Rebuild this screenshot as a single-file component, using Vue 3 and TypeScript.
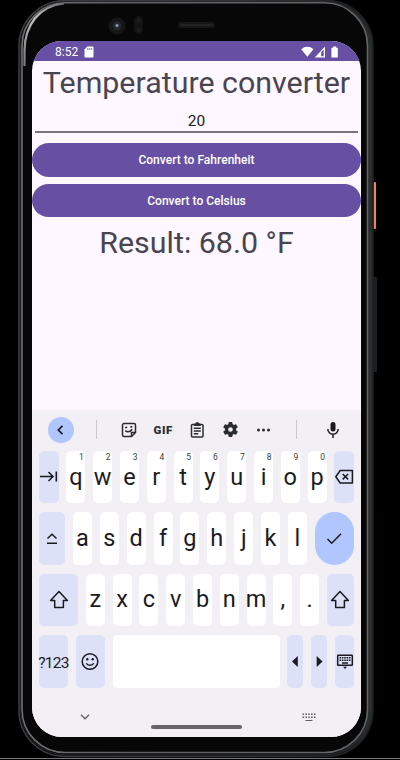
<script setup lang="ts">
import { ref } from 'vue'

interface Key {
  id: string
  w: number
  label?: string
  hint?: string
  icon?: string
  tone?: 'soft' | 'round'
}

const input = ref('20')
const result = ref('Result: 68.0 °F')

function convert(toFahrenheit: boolean): void {
  const value = Number(input.value)
  result.value = toFahrenheit
    ? `Result: ${((value * 9) / 5 + 32).toFixed(1)} °F`
    : `Result: ${(((value - 32) * 5) / 9).toFixed(1)} °C`
}

function letters(chars: string, hints = ''): Key[] {
  return chars.split('').map((c, i) => ({ id: c, w: 19, label: c, hint: hints[i] }))
}

const rows: Key[][] = [
  [
    { id: 'tab', w: 19.5, icon: 'tab', tone: 'soft' },
    ...letters('qwertyuiop', '1234567890'),
    { id: 'back', w: 19.5, icon: 'back', tone: 'soft' },
  ],
  [
    { id: 'caps', w: 26, icon: 'caps', tone: 'soft' },
    ...letters('asdfghjkl'),
    { id: 'done', w: 39, icon: 'done', tone: 'round' },
  ],
  [
    { id: 'shift-left', w: 39, icon: 'shift', tone: 'soft' },
    ...letters('zxcvbnm,.'),
    { id: 'shift-right', w: 27, icon: 'shift', tone: 'soft' },
  ],
  [
    { id: 'symbols', w: 29, label: '?123', tone: 'soft' },
    { id: 'emoji', w: 29, icon: 'emoji', tone: 'soft' },
    { id: 'space', w: 167 },
    { id: 'left', w: 15.5, icon: 'left', tone: 'soft' },
    { id: 'right', w: 16.5, icon: 'right', tone: 'soft' },
    { id: 'hide', w: 19, icon: 'hide', tone: 'soft' },
  ],
]
</script>

<template>
  <div class="stage">
    <svg class="body" viewBox="0 0 400 760" aria-hidden="true">
      <defs>
        <linearGradient id="rim" x1="0" y1="0" x2="1" y2="0">
          <stop offset="0" stop-color="#707276" />
          <stop offset="0.3" stop-color="#5f5d61" />
          <stop offset="1" stop-color="#626466" />
        </linearGradient>
        <linearGradient id="shine" x1="0" y1="1" x2="1" y2="0">
          <stop offset="0" stop-color="#77797b" />
          <stop offset="0.5" stop-color="#c4c5c1" />
          <stop offset="1" stop-color="#6c6c6e" />
        </linearGradient>
        <linearGradient id="edge" x1="0" y1="0" x2="1" y2="0">
          <stop offset="0" stop-color="#3c3e41" />
          <stop offset="0.6" stop-color="#333436" />
          <stop offset="1" stop-color="#1c1e1f" />
        </linearGradient>
        <linearGradient id="side" x1="0" y1="0" x2="1" y2="0">
          <stop offset="0.02" stop-color="#060607" />
          <stop offset="0.9" stop-color="#141516" />
          <stop offset="1" stop-color="#292c2d" />
        </linearGradient>
      </defs>
      <rect x="372" y="277" width="5" height="95" rx="1" fill="#1c1d1e" />
      <rect x="373.500" y="182" width="2.500" height="47" rx="1" fill="#ee806c" />
      <rect x="19" y="0.500" width="354" height="756" rx="46" fill="url(#side)" stroke="url(#edge)" stroke-width="1.500" />
      <rect x="22" y="2.800" width="345.500" height="749.700" rx="43" fill="#080708" stroke="url(#rim)" stroke-width="1.600" />
      <rect x="20.500" y="1.500" width="349.500" height="753.500" rx="45" fill="none" stroke="#37383a" stroke-width=".6" />
      <path d="M24.500 66V50C25 25 39 6 64 3.500" fill="none" stroke="url(#shine)" stroke-width="2.200" />
      <circle cx="117" cy="26" r="8.500" fill="#161617" />
      <circle cx="117" cy="26" r="4.500" fill="#23272e" />
      <circle cx="117" cy="25.500" r="1.600" fill="#8b98ab" />
      <rect x="134" y="16" width="9" height="18" rx="4.500" fill="#131314" />
      <circle cx="138.500" cy="20.500" r="2.500" fill="#1c1c1d" />
      <circle cx="138.500" cy="30" r="2.500" fill="#1c1c1d" />
      <rect x="178" y="22" width="37" height="6" rx="3" fill="#171718" />
      <rect x="180" y="24" width="33" height="2" rx="1" fill="#242424" />
      <path d="M0 758.500H400" stroke="#77787a" />
    </svg>

    <main class="screen">
      <header class="status">
        <span class="time">8:52</span>
        <svg class="sd" viewBox="0 0 10 12"><path d="M3.200 0.500H8.500a1 1 0 0 1 1 1V10.500a1 1 0 0 1-1 1H1.500a1 1 0 0 1-1-1V3.500Z" fill="#fff" /><path d="M3.800 2v2M5.700 2v2M7.600 2v2" stroke="#6750a4" stroke-width=".8" /></svg>
        <svg class="signals" viewBox="0 0 38 12">
          <path d="M0.300 3.200C3.800-.1 9-.1 12.500 3.200L6.400 10.800Z" fill="#fff" />
          <path d="M24 0.500V11.500H13.800Z" fill="#fff" />
          <path d="M20.200 6V10.300H22.700V3.400Z" fill="#6750a4" />
          <path d="M32.200 .5h3v1.200h1.600v9.700H30.400V1.700h1.800Z" fill="#fff" />
        </svg>
      </header>

      <section class="app">
        <h1 class="title">Temperature converter</h1>
        <div class="field"><input v-model="input" aria-label="Temperature" /></div>
        <button class="convert" @click="convert(true)">Convert to Fahrenheit</button>
        <button class="convert" @click="convert(false)">Convert to Celsius</button>
        <p class="result">{{ result }}</p>
      </section>

      <section class="keyboard">
        <div class="tools">
          <span class="collapse"><svg width="26" height="26" viewBox="0 0 26 26"><path d="M14.500 8.800L10.300 13L14.500 17.200" fill="none" stroke="#1b1b1f" stroke-width="1.700" /></svg></span>
          <i class="divider"></i>
          <div class="actions">
            <svg width="16" height="16" viewBox="0 0 16 16" fill="none" stroke="#2b2c30" stroke-width="1.500"><path d="M10.500 14.500H3A1.500 1.500 0 0 1 1.500 13V3A1.500 1.500 0 0 1 3 1.500H13A1.500 1.500 0 0 1 14.500 3V10.500Z" /><path d="M10.500 14.200V10.500H14.300" /><path d="M4.300 8.500C6 10.600 9 10.300 11.200 7.300M4.200 5.800L6.200 5.300M9.300 5.300L11.300 4.500" /></svg>
            <span class="gif">GIF</span>
            <svg width="16" height="18" viewBox="1 0 16 18" fill="none" stroke="#2b2c30" stroke-width="1.500"><rect x="2.500" y="3.500" width="11.500" height="12.500" rx="1" /><path d="M4.800 7.200h7M4.800 10h7M4.800 12.800h4.500" /><path d="M5.300 4.500V3H6.800a1.500 1.500 0 0 1 3 0H11.300V4.500Z" fill="#2b2c30" stroke-width="1" /></svg>
            <svg width="17" height="17" viewBox="1 1 22 22" fill="#2b2c30"><path d="M19.140 12.940c.04-.3.060-.61.060-.94s-.02-.64-.07-.94l2.030-1.580a.49.49 0 0 0 .12-.61l-1.920-3.320a.488.488 0 0 0-.59-.22l-2.390.96c-.5-.38-1.030-.7-1.620-.94L14.400 2.810a.484.484 0 0 0-.48-.41h-3.840c-.24 0-.43.17-.47.410L9.250 5.350c-.59.24-1.130.57-1.620.94l-2.390-.96c-.22-.08-.47 0-.59.22L2.740 8.870c-.12.210-.08.47.12.61l2.030 1.580c-.05.3-.09.63-.09.94s.02.64.070.94l-2.030 1.580a.49.49 0 0 0-.12.61l1.920 3.320c.12.220.37.290.59.220l2.390-.96c.5.380 1.030.7 1.620.940l.36 2.540c.050.24.24.41.48.41h3.840c.24 0 .44-.17.47-.41l.36-2.540c.59-.24 1.130-.56 1.620-.94l2.390.96c.22.080.47 0 .59-.22l1.920-3.320a.49.49 0 0 0-.12-.61zM12 15a3 3 0 1 1 0-6 3 3 0 0 1 0 6z" /></svg>
            <svg width="16" height="16" viewBox="0 0 16 16" fill="#2b2c30"><circle cx="3.500" cy="8" r="1.500" /><circle cx="8.500" cy="8" r="1.500" /><circle cx="13.500" cy="8" r="1.500" /></svg>
          </div>
          <i class="divider"></i>
          <svg class="mic" width="14" height="18" viewBox="0 0 14 18"><rect x="4.500" y="1" width="5" height="9.500" rx="2.500" fill="#1b1b1f" /><path d="M1.800 8a5.200 5.200 0 0 0 10.400 0M7 13v4" fill="none" stroke="#1b1b1f" stroke-width="1.500" /></svg>
        </div>

        <div v-for="(row, r) in rows" :key="r" class="row">
          <div
            v-for="key in row"
            :key="key.id"
            class="key"
            :class="[key.tone, { small: key.id === 'symbols' }]"
            :style="{ flexGrow: key.w }"
          >
            <small v-if="key.hint" class="hint">{{ key.hint }}</small>
            <span v-if="key.label" class="glyph">{{ key.label }}</span>
            <svg v-if="key.icon" class="icon" width="20" height="20" viewBox="0 0 20 20" fill="none" stroke="#1b1b1f" stroke-width="1.500">
              <path v-if="key.icon === 'tab'" d="M1 9.500H14M9.500 5L14 9.500L9.500 14M17.300 4.500V14.500" stroke-width="1.600" />
              <g v-else-if="key.icon === 'back'"><path d="M6.200 3.500H18.400V16H6.200L1.800 9.750Z" stroke-linejoin="round" /><path d="M8.700 7l5.400 5.400M14.100 7l-5.400 5.400" /></g>
              <path v-else-if="key.icon === 'caps'" d="M5.500 9.500L10 5.200L14.500 9.500M5 14.200H15" />
              <path v-else-if="key.icon === 'done'" d="M3.500 10L7.700 14.200L17 4.700" />
              <path v-else-if="key.icon === 'shift'" d="M10 1.500L18.400 10.500H14.400V17.500H5.700V10.500H1.600Z" stroke-linejoin="round" />
              <g v-else-if="key.icon === 'emoji'"><circle cx="10" cy="10.500" r="7.800" /><path d="M6.300 12.300C7.500 14.900 12.500 14.900 13.700 12.300" /><circle cx="7.300" cy="8.200" r="1.200" fill="#1b1b1f" stroke="none" /><circle cx="12.700" cy="8.200" r="1.200" fill="#1b1b1f" stroke="none" /></g>
              <path v-else-if="key.icon === 'left'" d="M12.800 5V16L7 10.500Z" fill="#1b1b1f" stroke="none" />
              <path v-else-if="key.icon === 'right'" d="M7.700 5V16L13.500 10.500Z" fill="#1b1b1f" stroke="none" />
              <g v-else><rect x="2.700" y="4.200" width="14.600" height="10" rx=".5" /><path d="M4.500 6.800H15.500M4.500 9.300H15.500" stroke-dasharray="1.600 .75" /><path d="M7 12H13" /><path d="M8 15.800H12L10 18Z" fill="#1b1b1f" stroke="none" /></g>
            </svg>
          </div>
        </div>
      </section>

      <footer class="nav">
        <svg width="12" height="8" viewBox="0 0 12 8"><path d="M2 1.800L6 5.800L10 1.800" fill="none" stroke="#5f5e63" stroke-width="1.300" /></svg>
        <i class="pill"></i>
        <svg width="14" height="9" viewBox="0 0 14 9" fill="none" stroke="#5f5e63"><path d="M.5 1.200H13.500M.5 4.200H13.500" stroke-width="1.500" stroke-dasharray="1.600 1.250" /><path d="M3.500 7.500H10.500" stroke-width="1.200" /></svg>
      </footer>
    </main>
  </div>
</template>

<style>
body {
  margin: 0;
  background: #000;
}
</style>

<style scoped>
.stage {
  position: relative;
  box-sizing: border-box;
  width: 400px;
  height: 760px;
  padding: 41px 39px 23px 32px;
  overflow: hidden;
  background: #000;
  font-family: Roboto, sans-serif;
}
.body {
  position: absolute;
  inset: 0;
  width: 400px;
  height: 760px;
}
.screen {
  position: relative;
  display: flex;
  flex-direction: column;
  width: 329px;
  height: 696px;
  overflow: hidden;
  border-radius: 30px;
  background: #fef7ff;
}
.status {
  display: flex;
  align-items: center;
  box-sizing: border-box;
  height: 20px;
  padding: 1px 22px 0 23px;
  background: #6750a4;
  color: #fff;
}
.time {
  width: 29px;
  font-size: 12px;
  line-height: 20px;
}
.sd {
  width: 10px;
  height: 12px;
}
.signals {
  width: 38px;
  height: 12px;
  margin-left: auto;
}
.app {
  display: flex;
  flex-direction: column;
  height: 348.500px;
}
.title,
.result {
  margin: 0;
  color: #49454f;
  font-weight: 400;
  text-align: center;
  white-space: nowrap;
}
.title {
  height: 44px;
  font-size: 30.400px;
  line-height: 44px;
}
.field {
  height: 26px;
  margin: 0 3px 10px;
  border-bottom: 2px solid #79747e;
}
.field input {
  box-sizing: border-box;
  width: 100%;
  height: 32px;
  padding: 0;
  border: 0;
  outline: 0;
  background: transparent;
  color: #1d1b20;
  font: 400 15.500px/32px Roboto, sans-serif;
  text-align: center;
}
.convert {
  height: 34px;
  margin: 0 0 6.500px;
  padding: 1px 0 0;
  border: 0;
  border-radius: 17px;
  background: #6750a4;
  color: #fff;
  font: 500 12px/33px Roboto, sans-serif;
  letter-spacing: 0.02px;
}
.convert + .convert {
  height: 33.500px;
}
.result {
  height: 40px;
  font-size: 30.400px;
  line-height: 37px;
}
.keyboard {
  display: flex;
  flex-direction: column;
  gap: 8.900px;
  height: 280px;
  padding: 0 7px;
  background: #f2eff5;
}
.tools {
  display: flex;
  align-items: center;
  height: 40.500px;
  margin-bottom: -8px;
  padding: 0 14px 0 8.500px;
}
.collapse {
  display: flex;
  width: 26px;
  height: 26px;
  border-radius: 50%;
  background: #b1c5ff;
}
.divider {
  width: 1px;
  height: 19px;
  background: #c9c7ce;
}
.collapse + .divider {
  margin-left: 22.500px;
}
.actions {
  display: flex;
  flex: 1;
  align-items: center;
  justify-content: space-between;
  padding: 0 25px 0 24px;
}
.gif {
  width: 20px;
  color: #2b2c30;
  font: 900 11.500px/16px Roboto, sans-serif;
  letter-spacing: 0.6px;
  text-align: center;
}
.mic {
  margin-left: 29px;
}
.row {
  display: flex;
  gap: 7.800px;
  height: 52.500px;
}
.key {
  position: relative;
  display: flex;
  flex: 1 1 0;
  align-items: center;
  justify-content: center;
  min-width: 0;
  border-radius: 5px;
  background: #fff;
  color: #1b1b1f;
}
.key.soft {
  background: #dce1f8;
}
.key.round {
  border-radius: 20px;
  background: #b1c5ff;
}
.glyph {
  margin-top: -1px;
  font-size: 23.500px;
  line-height: 24px;
}
.key.small .glyph {
  margin-top: 3px;
  font-size: 15.500px;
  letter-spacing: -0.700px;
  white-space: nowrap;
}
.hint {
  position: absolute;
  top: 1px;
  right: 1.500px;
  color: #3c3d42;
  font-size: 8.500px;
  line-height: 11px;
}
.icon {
  flex: none;
}
.nav {
  display: flex;
  flex: 1;
  align-items: flex-start;
  justify-content: space-between;
  padding: 23px 45px 0 47px;
  background: #f2eff5;
}
.pill {
  width: 91px;
  height: 4px;
  margin-top: 12px;
  border-radius: 2px;
  background: #66646a;
}
</style>
